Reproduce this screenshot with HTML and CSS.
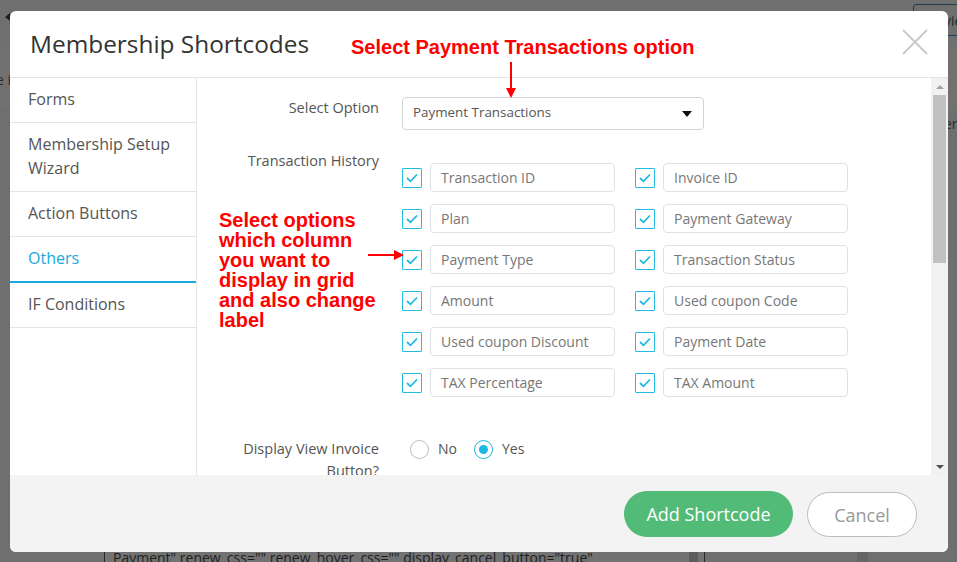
FILE: index.html
```html
<!DOCTYPE html>
<html>
<head>
<meta charset="utf-8">
<link rel="stylesheet" href="styles.css">
</head>
<body>
<div class="page">
  <div class="bg-band"></div>
  <div class="bg-left-text">e is</div>
  <div class="bg-tri"></div>
  <div class="bg-btn">vie</div>
  <div class="bg-right-text">er</div>
  <div class="bg-code">Payment" renew_css="" renew_hover_css="" display_cancel_button="true"</div>
  <div class="bg-block b1"></div>
  <div class="bg-block b2"></div>

  <div class="modal">
    <div class="modal-header">
      <h1 class="modal-title">Membership Shortcodes</h1>
      <svg class="close" width="26" height="26" viewBox="0 0 26 26"><path d="M1 1 L25 25 M25 1 L1 25" stroke="#c9c9c9" stroke-width="1.8" fill="none"/></svg>
    </div>
    <div class="modal-body">
      <ul class="sidebar">
        <li class="nav-item">Forms</li>
        <li class="nav-item">Membership Setup Wizard</li>
        <li class="nav-item">Action Buttons</li>
        <li class="nav-item active">Others</li>
        <li class="nav-item">IF Conditions</li>
      </ul>
      <div class="content">
        <div class="form-row">
          <div class="label">Select Option</div>
          <div class="select">
            <span>Payment Transactions</span>
            <span class="caret"></span>
          </div>
        </div>
        <div class="form-row history">
          <div class="label">Transaction History</div>
          <div class="check-grid">
            <div class="check-cell"><span class="cb"><svg width="12" height="10" viewBox="0 0 12 10"><path d="M1 5 L4.5 8.3 L11 1.5" stroke="#1fb8e0" stroke-width="1.8" fill="none"/></svg></span><div class="text-input">Transaction ID</div></div>
            <div class="check-cell"><span class="cb"><svg width="12" height="10" viewBox="0 0 12 10"><path d="M1 5 L4.5 8.3 L11 1.5" stroke="#1fb8e0" stroke-width="1.8" fill="none"/></svg></span><div class="text-input">Invoice ID</div></div>
            <div class="check-cell"><span class="cb"><svg width="12" height="10" viewBox="0 0 12 10"><path d="M1 5 L4.5 8.3 L11 1.5" stroke="#1fb8e0" stroke-width="1.8" fill="none"/></svg></span><div class="text-input">Plan</div></div>
            <div class="check-cell"><span class="cb"><svg width="12" height="10" viewBox="0 0 12 10"><path d="M1 5 L4.5 8.3 L11 1.5" stroke="#1fb8e0" stroke-width="1.8" fill="none"/></svg></span><div class="text-input">Payment Gateway</div></div>
            <div class="check-cell"><span class="cb"><svg width="12" height="10" viewBox="0 0 12 10"><path d="M1 5 L4.5 8.3 L11 1.5" stroke="#1fb8e0" stroke-width="1.8" fill="none"/></svg></span><div class="text-input">Payment Type</div></div>
            <div class="check-cell"><span class="cb"><svg width="12" height="10" viewBox="0 0 12 10"><path d="M1 5 L4.5 8.3 L11 1.5" stroke="#1fb8e0" stroke-width="1.8" fill="none"/></svg></span><div class="text-input">Transaction Status</div></div>
            <div class="check-cell"><span class="cb"><svg width="12" height="10" viewBox="0 0 12 10"><path d="M1 5 L4.5 8.3 L11 1.5" stroke="#1fb8e0" stroke-width="1.8" fill="none"/></svg></span><div class="text-input">Amount</div></div>
            <div class="check-cell"><span class="cb"><svg width="12" height="10" viewBox="0 0 12 10"><path d="M1 5 L4.5 8.3 L11 1.5" stroke="#1fb8e0" stroke-width="1.8" fill="none"/></svg></span><div class="text-input">Used coupon Code</div></div>
            <div class="check-cell"><span class="cb"><svg width="12" height="10" viewBox="0 0 12 10"><path d="M1 5 L4.5 8.3 L11 1.5" stroke="#1fb8e0" stroke-width="1.8" fill="none"/></svg></span><div class="text-input">Used coupon Discount</div></div>
            <div class="check-cell"><span class="cb"><svg width="12" height="10" viewBox="0 0 12 10"><path d="M1 5 L4.5 8.3 L11 1.5" stroke="#1fb8e0" stroke-width="1.8" fill="none"/></svg></span><div class="text-input">Payment Date</div></div>
            <div class="check-cell"><span class="cb"><svg width="12" height="10" viewBox="0 0 12 10"><path d="M1 5 L4.5 8.3 L11 1.5" stroke="#1fb8e0" stroke-width="1.8" fill="none"/></svg></span><div class="text-input">TAX Percentage</div></div>
            <div class="check-cell"><span class="cb"><svg width="12" height="10" viewBox="0 0 12 10"><path d="M1 5 L4.5 8.3 L11 1.5" stroke="#1fb8e0" stroke-width="1.8" fill="none"/></svg></span><div class="text-input">TAX Amount</div></div>
          </div>
        </div>
        <div class="form-row radios-row">
          <div class="label">Display View Invoice Button?</div>
          <div class="radios">
            <span class="radio"></span><span class="radio-label">No</span>
            <span class="radio checked"></span><span class="radio-label">Yes</span>
          </div>
        </div>
      </div>
      <div class="scrollbar">
        <div class="sb-btn"><span class="tri-up"></span></div>
        <div class="sb-track"><div class="sb-thumb"></div></div>
        <div class="sb-btn"><span class="tri-down"></span></div>
      </div>
    </div>
    <div class="modal-footer">
      <button class="btn btn-primary">Add Shortcode</button>
      <button class="btn btn-cancel">Cancel</button>
    </div>
  </div>

  <div class="note note-top">Select Payment Transactions option</div>
  <div class="arrow-down"></div>
  <div class="note note-left">Select options<br>which column<br>you want to<br>display in grid<br>and also change<br>label</div>
  <div class="arrow-right"></div>
</div>
</body>
</html>
```
FILE: styles.css
```css
* { box-sizing: border-box; }
html, body { margin: 0; padding: 0; }
body { background: #6f6f6f; font-family: "Open Sans", "Noto Sans", sans-serif; }
.page { position: relative; width: 957px; height: 562px; overflow: hidden; background: #6f6f6f; }

.bg-band { position: absolute; left: 0; top: 47px; width: 957px; height: 62px; background: #737170; }
.bg-left-text { position: absolute; left: -4px; top: 70px; font-size: 14px; color: #2a2a2a; }
.bg-tri { position: absolute; left: 5px; top: 13px; width: 0; height: 0; border-top: 4px solid transparent; border-bottom: 4px solid transparent; border-right: 5px solid #1d1d1d; }
.bg-btn { position: absolute; left: 913px; top: 4px; width: 60px; height: 32px; border: 1px solid #1e3d4d; border-radius: 3px; font-size: 14px; color: #1a2a33; padding: 6px 0 0 30px; }
.bg-right-text { position: absolute; left: 944px; top: 114px; font-size: 14px; color: #2a2a2a; }
.bg-code { position: absolute; left: 104px; top: 548px; width: 601px; height: 20px; border-left: 1px solid #2a2a2a; border-right: 1px solid #2a2a2a; background: #727272; font-size: 14px; color: #1e1e1e; padding-left: 8px; white-space: nowrap; overflow: hidden; font-family: "Open Sans", sans-serif; }
.bg-block { position: absolute; top: 552px; height: 10px; background: #5c5c5c; }
.bg-block.b1 { left: 689px; width: 9px; }
.bg-block.b2 { left: 857px; width: 11px; background: #656565; }

.modal { position: absolute; left: 10px; top: 11px; width: 938px; height: 541px; background: #fff; border-radius: 6px; overflow: hidden; display: flex; flex-direction: column; }

.modal-header { height: 67px; border-bottom: 1px solid #e2e5ea; display: flex; align-items: center; justify-content: space-between; padding: 0 19px 0 20px; flex: none; }
.modal-title { margin: 0; font-size: 24.4px; font-weight: 400; color: #333; margin-top: -2px; }
.close { margin-top: -5px; margin-right: 1px; }

.modal-body { display: flex; height: 397px; flex: none; }
.sidebar { list-style: none; margin: 0; padding: 0; width: 187px; border-right: 1px solid #e2e5ea; flex: none; }
.nav-item { font-size: 16px; line-height: 24px; color: #555; padding: 9px 18px 11px; border-bottom: 1px solid #e2e5ea; }
.nav-item.active { color: #1aa8e0; border-bottom: 2px solid #1aa8e0; padding-bottom: 11px; }

.content { flex: 1; overflow: hidden; padding: 19px 0 0 20px; }
.form-row { display: flex; align-items: flex-start; }
.label { width: 162px; flex: none; text-align: right; font-size: 14.5px; line-height: 22px; color: #555; margin-right: 23px; }

.select { width: 302px; height: 33px; border: 1px solid #d4d4d4; border-radius: 4px; display: flex; align-items: center; justify-content: space-between; padding: 0 11px 0 10px; font-size: 13.4px; color: #555; }
.select span:first-child { margin-top: -3px; }
.caret { width: 0; height: 0; border-left: 5px solid transparent; border-right: 5px solid transparent; border-top: 6px solid #111; }

.history { margin-top: 20px; }
.check-grid { display: grid; grid-template-columns: 213px 213px; column-gap: 20px; row-gap: 12px; margin-top: 13px; }
.check-cell { display: flex; align-items: center; }
.cb { width: 20px; height: 20px; border: 1px solid #22bce2; border-radius: 1px; display: flex; align-items: center; justify-content: center; flex: none; margin-right: 8px; }
.text-input { width: 185px; height: 29px; border: 1px solid #dde2e8; border-radius: 4px; font-size: 14px; color: #777; line-height: 27px; padding-left: 10px; white-space: nowrap; }

.radios-row { margin-top: 41px; }
.radios { display: flex; align-items: center; height: 22px; padding-left: 8px; }
.radio { width: 19px; height: 19px; border-radius: 50%; border: 1px solid #bdbdbd; display: flex; align-items: center; justify-content: center; flex: none; }
.radio.checked { border-color: #1fb8e0; }
.radio.checked::after { content: ""; width: 9px; height: 9px; border-radius: 50%; background: #1fb8e0; }
.radio-label { font-size: 14px; color: #555; margin-left: 9px; margin-right: 17px; margin-top: -2px; }

.scrollbar { width: 17px; flex: none; background: #f1f1f1; display: flex; flex-direction: column; }
.sb-btn { height: 17px; display: flex; align-items: center; justify-content: center; flex: none; }
.tri-up { width: 0; height: 0; border-left: 4px solid transparent; border-right: 4px solid transparent; border-bottom: 4px solid #a3a3a3; }
.tri-down { width: 0; height: 0; border-left: 4px solid transparent; border-right: 4px solid transparent; border-top: 4px solid #505050; }
.sb-track { flex: 1; padding: 0 2px; }
.sb-thumb { height: 168px; background: #c1c1c1; }

.modal-footer { flex: 1; background: #f3f3f3; display: flex; justify-content: flex-end; align-items: flex-start; padding: 16px 31px 0 0; gap: 14px; }
.btn { font-family: "Open Sans", sans-serif; font-size: 18px; border-radius: 23px; cursor: pointer; }
.btn-primary { width: 169px; height: 46px; background: #52bb77; border: none; color: #fff; }
.btn-cancel { width: 110px; height: 45px; background: #fff; border: 1px solid #bcbcbc; color: #999; margin-top: 1px; }

.note { position: absolute; font-family: "Liberation Sans", Arial, sans-serif; font-weight: 700; font-size: 20px; line-height: 20px; color: #f00; }
.note-top { left: 351px; top: 37px; white-space: nowrap; }
.note-left { left: 219px; top: 210px; }
.arrow-down { position: absolute; left: 510px; top: 62px; width: 2px; height: 28px; background: #f00; }
.arrow-down::after { content: ""; position: absolute; left: -4px; top: 26px; border-left: 5px solid transparent; border-right: 5px solid transparent; border-top: 10px solid #f00; }
.arrow-right { position: absolute; left: 368px; top: 254px; width: 28px; height: 2px; background: #f00; }
.arrow-right::after { content: ""; position: absolute; left: 26px; top: -4px; border-top: 5px solid transparent; border-bottom: 5px solid transparent; border-left: 10px solid #f00; }
```
